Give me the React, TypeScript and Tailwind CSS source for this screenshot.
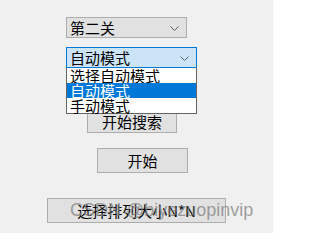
const cjk = { fontFamily: '"Noto Sans CJK SC", "Noto Sans", sans-serif' };

function Chevron({ className }: { className: string }) {
    return (
        <svg width="9" height="5" viewBox="0 0 9 5" className={className}>
            <path d="M0.5 0.5 L4.5 4.5 L8.5 0.5" fill="none" stroke="#606060" strokeWidth="1" />
        </svg>
    );
}

export default function App() {
    const options = ['选择自动模式', '自动模式', '手动模式'];

    return (
        <div className="relative h-[233px] w-[273px] overflow-hidden bg-[#f0f0f0] text-[15px] leading-none text-black" style={cjk}>
            <div className="flex flex-col items-start pt-[17px]">
                {/* 关卡选择 */}
                <div className="ml-[66px] flex h-[21px] w-[121px] items-center justify-between border border-[#adadad] bg-[#e1e1e1] pl-[3px] pr-[7px]">
                    <span>第二关</span>
                    <Chevron className="mt-[1px]" />
                </div>

                {/* 模式选择 (展开) */}
                <div className="relative mt-[9px] ml-[66px] w-[131px]">
                    <div className="flex h-[21px] items-center justify-between border border-[#0078d7] bg-[#cce4f7] pl-[3px] pr-[7px]">
                        <span>自动模式</span>
                        <Chevron className="mt-[1px]" />
                    </div>
                    <div className="absolute top-full left-0 z-10 flex w-full flex-col border border-t-0 border-[#646464] bg-white">
                        {options.map((o, i) => (
                            <div
                                key={o}
                                className={
                                    i === 1
                                        ? 'flex h-[15px] items-center bg-[#0078d7] pl-[3px] text-white'
                                        : 'flex h-[15px] items-center pl-[3px]'
                                }
                            >
                                {o}
                            </div>
                        ))}
                    </div>
                </div>

                <button className="mt-[41px] ml-[87px] flex h-[24px] w-[90px] items-center justify-center border border-[#adadad] bg-[#e1e1e1]">
                    开始搜索
                </button>
                <button className="mt-[15px] ml-[97px] flex h-[25px] w-[91px] items-center justify-center border border-[#adadad] bg-[#e1e1e1]">
                    开始
                </button>
                <button className="mt-[25px] ml-[47px] flex h-[25px] w-[179px] items-center justify-center border border-[#adadad] bg-[#e1e1e1]">
                    选择排列大小N*N
                </button>
            </div>

            {/* 水印 */}
            <div
                className="pointer-events-none absolute top-[201px] left-[70px] text-[18px] leading-none whitespace-nowrap text-[#808080]/75"
                style={{ fontFamily: '"Liberation Sans", Arial, sans-serif' }}
            >
                CSDN @biyezuopinvip
            </div>
        </div>
    );
}
